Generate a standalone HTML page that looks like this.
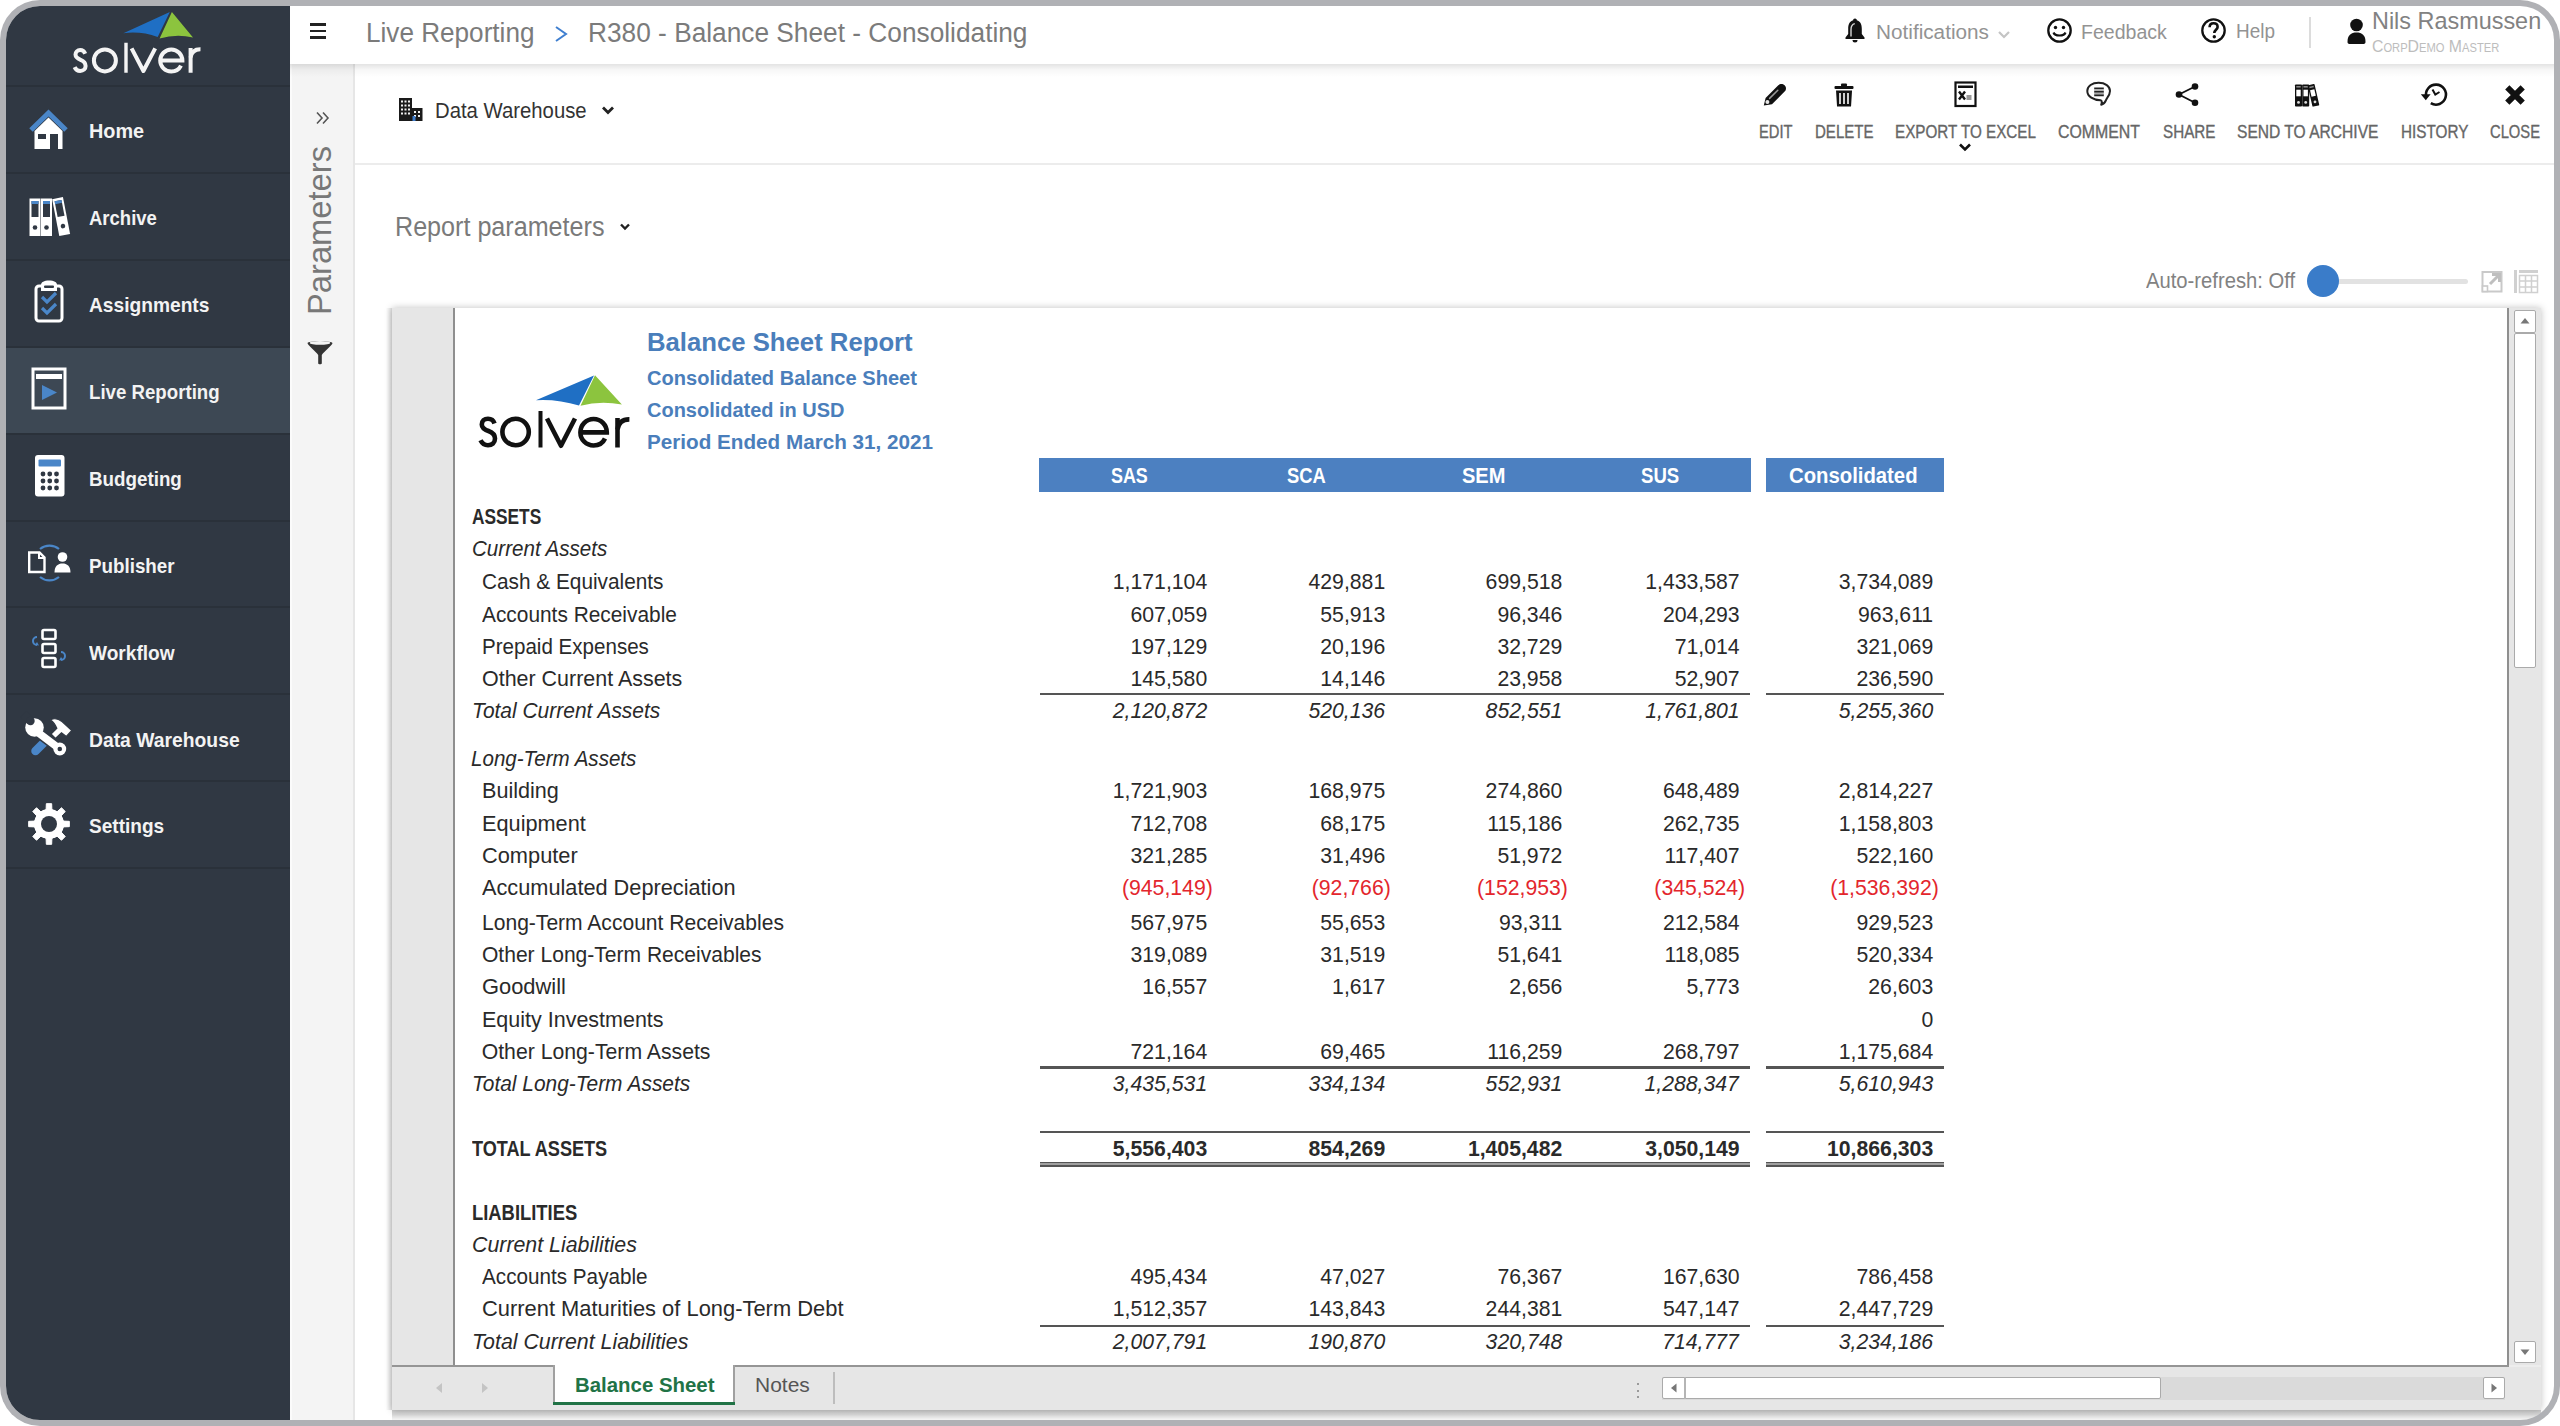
<!DOCTYPE html>
<html><head><meta charset="utf-8"><title>Solver - Balance Sheet</title>
<style>
html,body{margin:0;padding:0;width:2560px;height:1426px;overflow:hidden;background:#fff;}
body{font-family:"Liberation Sans",sans-serif;}
.frame{position:absolute;left:0;top:0;width:2560px;height:1426px;border-radius:40px;background:#b0b1b5;}
.inner{position:absolute;left:6px;top:6px;width:2548px;height:1414px;border-radius:34px;overflow:hidden;background:#fff;}
.w{position:absolute;left:-6px;top:-6px;width:2560px;height:1426px;}
.t{position:absolute;white-space:pre;}
.r{position:absolute;}
.s{position:absolute;overflow:visible;}
</style></head><body>
<div class="frame"><div class="inner"><div class="w">
<div class="r" style="left:290.00px;top:64.00px;width:64.00px;height:1362.00px;background:#f4f4f4;"></div>
<div class="r" style="left:354.00px;top:163.00px;width:2206.00px;height:2.00px;background:#ececec;"></div>
<div class="r" style="left:353.00px;top:64.00px;width:1.50px;height:1362.00px;background:#e6e6e6;"></div>
<div class="r" style="left:290.00px;top:64.00px;width:1.50px;height:1362.00px;background:#fbfbfb;"></div>
<div class="r" style="left:290.00px;top:64.00px;width:2270.00px;height:13.00px;background:linear-gradient(rgba(0,0,0,0.11),rgba(0,0,0,0.03) 45%,rgba(0,0,0,0));"></div>
<div class="r" style="left:0.00px;top:0.00px;width:290.00px;height:1426.00px;background:#303843;"></div>
<div class="r" style="left:0.00px;top:85.00px;width:290.00px;height:2.00px;background:#2a313a;"></div>
<div class="r" style="left:0.00px;top:171.90px;width:290.00px;height:2.00px;background:#2a313a;"></div>
<div class="r" style="left:0.00px;top:258.80px;width:290.00px;height:2.00px;background:#2a313a;"></div>
<div class="r" style="left:0.00px;top:345.70px;width:290.00px;height:2.00px;background:#2a313a;"></div>
<div class="r" style="left:0.00px;top:432.60px;width:290.00px;height:2.00px;background:#2a313a;"></div>
<div class="r" style="left:0.00px;top:519.50px;width:290.00px;height:2.00px;background:#2a313a;"></div>
<div class="r" style="left:0.00px;top:606.40px;width:290.00px;height:2.00px;background:#2a313a;"></div>
<div class="r" style="left:0.00px;top:693.30px;width:290.00px;height:2.00px;background:#2a313a;"></div>
<div class="r" style="left:0.00px;top:780.20px;width:290.00px;height:2.00px;background:#2a313a;"></div>
<div class="r" style="left:0.00px;top:867.10px;width:290.00px;height:2.00px;background:#2a313a;"></div>
<div class="r" style="left:0.00px;top:347.50px;width:290.00px;height:85.30px;background:#3d4854;"></div>
<div class="r" style="left:392.00px;top:308.00px;width:2149.00px;height:1102.00px;background:#ffffff;box-shadow:0 0 7px rgba(0,0,0,0.25);"></div>
<div class="r" style="left:392.00px;top:1410.00px;width:2149.00px;height:10.00px;background:linear-gradient(rgba(0,0,0,0.20),rgba(0,0,0,0.16) 45%,rgba(0,0,0,0.04));"></div>
<div class="r" style="left:386.00px;top:308.00px;width:6.00px;height:1102.00px;background:linear-gradient(90deg,rgba(0,0,0,0),rgba(0,0,0,0.13));"></div>
<div class="r" style="left:392.00px;top:308.00px;width:60.50px;height:1057.00px;background:#e6e6e6;"></div>
<div class="r" style="left:452.50px;top:308.00px;width:2.00px;height:1057.00px;background:#8f8f8f;"></div>
<div class="r" style="left:2507.00px;top:308.00px;width:2.00px;height:1057.00px;background:#8f8f8f;"></div>
<div class="r" style="left:2509.00px;top:308.00px;width:32.00px;height:1057.00px;background:#e6e6e6;"></div>
<div class="r" style="left:392.00px;top:1365.00px;width:162.50px;height:2.00px;background:#959595;"></div>
<div class="r" style="left:733.50px;top:1365.00px;width:1775.50px;height:2.00px;background:#959595;"></div>
<div class="r" style="left:2509.00px;top:1365.00px;width:32.00px;height:2.00px;background:#ededed;"></div>
<div class="r" style="left:392.00px;top:1367.00px;width:2149.00px;height:43.00px;background:#e6e6e6;"></div>
<svg class="s" style="left:60.00px;top:0.00px;" width="150" height="85" viewBox="0 0 150 85">
<path d="M123.4 33.2 L169.8 12.1 L157.7 36.9 Q141 31 123.4 33.2 Z" fill="#1f6fc4" transform="translate(-60,0)"/>
<path d="M171.9 12.1 L193 37.4 Q176 33.5 159.6 38.5 Z" fill="#8cc43e" transform="translate(-60,0)"/>
<g transform="translate(-60,0)" fill="none" stroke="#f4f4f4" stroke-width="4">
<path d="M85.2 53.8 C84.2 51.3 82.3 50.1 80.2 50.1 C77.4 50.1 75.5 51.9 75.5 54.6 C75.5 57.6 78.1 58.8 80.6 59.8 C83.6 61 85.6 62.6 85.6 65.9 C85.6 69.1 83.3 70.9 80.2 70.9 C77.6 70.9 75.6 69.4 74.6 67.1"/>
<circle cx="104.9" cy="60.4" r="11"/>
<path d="M126 42.7 V72.8" stroke-width="3.4"/>
<path d="M131.6 48.3 L143.4 71 L155.2 48.3" stroke-linejoin="round"/>
<path d="M160.4 60.6 H182.4 C182.4 54.4 177.4 49.5 171.3 49.5 C165.2 49.5 160.2 54.4 160.2 60.6 C160.2 66.7 165.2 71.5 171.3 71.5 C175.6 71.5 179.2 69.2 181 65.6"/>
<path d="M190.6 48 V72.8"/>
<path d="M190.6 57.5 C191.5 52 195.2 49.2 200.5 49.3" />
</g></svg>
<div class="t" style="left:88.60px;top:120.25px;font-size:21.08px;line-height:21.08px;color:#f3f3f3;font-weight:700;transform:scaleX(0.9411);transform-origin:left top;">Home</div>
<div class="t" style="left:88.60px;top:207.15px;font-size:21.08px;line-height:21.08px;color:#f3f3f3;font-weight:700;transform:scaleX(0.8783);transform-origin:left top;">Archive</div>
<div class="t" style="left:88.60px;top:294.05px;font-size:21.08px;line-height:21.08px;color:#f3f3f3;font-weight:700;transform:scaleX(0.9098);transform-origin:left top;">Assignments</div>
<div class="t" style="left:88.60px;top:380.95px;font-size:21.08px;line-height:21.08px;color:#f3f3f3;font-weight:700;transform:scaleX(0.8851);transform-origin:left top;">Live Reporting</div>
<div class="t" style="left:88.60px;top:467.85px;font-size:21.08px;line-height:21.08px;color:#f3f3f3;font-weight:700;transform:scaleX(0.8908);transform-origin:left top;">Budgeting</div>
<div class="t" style="left:88.60px;top:554.75px;font-size:21.08px;line-height:21.08px;color:#f3f3f3;font-weight:700;transform:scaleX(0.8913);transform-origin:left top;">Publisher</div>
<div class="t" style="left:88.60px;top:641.65px;font-size:21.08px;line-height:21.08px;color:#f3f3f3;font-weight:700;transform:scaleX(0.9058);transform-origin:left top;">Workflow</div>
<div class="t" style="left:88.60px;top:728.55px;font-size:21.08px;line-height:21.08px;color:#f3f3f3;font-weight:700;transform:scaleX(0.9164);transform-origin:left top;">Data Warehouse</div>
<div class="t" style="left:88.60px;top:815.45px;font-size:21.08px;line-height:21.08px;color:#f3f3f3;font-weight:700;transform:scaleX(0.9033);transform-origin:left top;">Settings</div>
<svg class="s" style="left:28.00px;top:108.00px;" width="42" height="42" viewBox="0 0 42 42">
<path d="M3 22 L20.5 5 L38 22" fill="none" stroke="#4a86c8" stroke-width="5" stroke-linejoin="miter"/>
<path d="M6.5 23 L20.5 9.5 L34.5 23 V41 H6.5 Z" fill="#ffffff"/>
<rect x="10" y="26" width="8" height="5" fill="#303843"/>
<rect x="22" y="26" width="8" height="15" fill="#303843"/>
</svg>
<svg class="s" style="left:28.00px;top:196.00px;" width="46" height="42" viewBox="0 0 46 42">
<g>
<rect x="1.5" y="2.5" width="11" height="37.5" fill="#ffffff"/>
<rect x="13" y="2.5" width="11" height="37.5" fill="#ffffff"/>
<g transform="rotate(-11 31.3 40)"><rect x="31.3" y="2.5" width="11" height="37.5" fill="#ffffff"/>
<rect x="33.3" y="5" width="7" height="16" fill="#303843"/><rect x="33.3" y="5" width="7" height="3" fill="#4a86c8"/><circle cx="36.8" cy="31" r="2.3" fill="#303843"/></g>
<rect x="3.5" y="5" width="7" height="16" fill="#303843"/><rect x="3.5" y="5" width="7" height="3" fill="#4a86c8"/><circle cx="7" cy="31.5" r="2.3" fill="#303843"/>
<rect x="15" y="5" width="7" height="16" fill="#303843"/><rect x="15" y="5" width="7" height="3" fill="#4a86c8"/><circle cx="18.5" cy="31.5" r="2.3" fill="#303843"/>
</g></svg>
<svg class="s" style="left:32.00px;top:277.00px;" width="36" height="48" viewBox="0 0 36 48">
<rect x="4" y="9" width="26" height="35" rx="3" fill="none" stroke="#ffffff" stroke-width="3"/>
<path d="M9 14 V8 C9 5 12 3.5 17 3.5 C22 3.5 25 5 25 8 V14 Z" fill="#ffffff"/>
<rect x="12" y="8.5" width="10" height="2.5" rx="1" fill="#303843"/>
<path d="M10 20 L15 25 L24 16 M10 31 L15 36 L24 27" fill="none" stroke="#4a86c8" stroke-width="3.2"/>
</svg>
<svg class="s" style="left:30.00px;top:366.00px;" width="40" height="46" viewBox="0 0 40 46">
<rect x="3" y="3" width="32" height="39" fill="none" stroke="#ffffff" stroke-width="3"/>
<rect x="6" y="8" width="26" height="5" fill="#ffffff"/>
<path d="M12 19 L27 26.5 L12 34 Z" fill="#4a86c8"/>
</svg>
<svg class="s" style="left:33.00px;top:453.00px;" width="34" height="46" viewBox="0 0 34 46">
<rect x="2" y="2" width="29.5" height="41.5" rx="3" fill="#ffffff"/>
<rect x="5.5" y="6.5" width="22.5" height="7" rx="1" fill="#4a86c8"/>
<g fill="#303843">
<circle cx="10" cy="21" r="2.4"/><circle cx="16.75" cy="21" r="2.4"/><circle cx="23.5" cy="21" r="2.4"/>
<circle cx="10" cy="28" r="2.4"/><circle cx="16.75" cy="28" r="2.4"/><circle cx="23.5" cy="28" r="2.4"/>
<circle cx="10" cy="35" r="2.4"/><circle cx="16.75" cy="35" r="2.4"/><circle cx="23.5" cy="35" r="2.4"/>
</g></svg>
<svg class="s" style="left:26.00px;top:544.00px;" width="48" height="38" viewBox="0 0 48 38">
<path d="M14 5 A15 15 0 0 1 33 5" fill="none" stroke="#4a86c8" stroke-width="2.2"/>
<path d="M14 33 A15 15 0 0 0 33 33" fill="none" stroke="#4a86c8" stroke-width="2.2"/>
<path d="M3.2 8.5 H13.5 L18.5 13.5 V28 H3.2 Z" fill="none" stroke="#ffffff" stroke-width="2.4"/>
<path d="M13 8.5 V14 H18.5" fill="none" stroke="#ffffff" stroke-width="2"/>
<circle cx="36.5" cy="13" r="4.8" fill="#ffffff"/>
<path d="M28.5 28.5 C28.5 22 32 19.5 36.5 19.5 C41 19.5 44.5 22 44.5 28.5 Z" fill="#ffffff"/>
</svg>
<svg class="s" style="left:28.00px;top:626.00px;" width="44" height="48" viewBox="0 0 44 48">
<g fill="none" stroke="#ffffff" stroke-width="2.6">
<rect x="14.5" y="4" width="13" height="9" rx="1.5"/>
<rect x="14.5" y="18" width="13" height="9" rx="1.5"/>
<rect x="14.5" y="32" width="13" height="9" rx="1.5"/>
</g>
<path d="M9 11 A4 4 0 0 0 9 19" fill="none" stroke="#4a86c8" stroke-width="2"/>
<path d="M7 19 L11 19.5 L9 16 Z" fill="#4a86c8"/>
<path d="M33 26 A4 4 0 0 1 33 34" fill="none" stroke="#4a86c8" stroke-width="2"/>
<path d="M35 34 L31 34.5 L33 31 Z" fill="#4a86c8"/>
</svg>
<svg class="s" style="left:20.00px;top:700.00px;" width="60" height="70" viewBox="20 700 60 70">
<path d="M35.5 751 L44 742.5" stroke="#4a86c8" stroke-width="8.5" stroke-linecap="round"/>
<path d="M50.5 720 C54 718 58 718.5 62 721.5 L71.8 730.5 L66.3 736.5 L61.5 732.8 L55.5 738.5 L51 734 L56.8 728.3 C55.5 725 53.5 722 50.5 720 Z" fill="#ffffff" stroke="#303843" stroke-width="1.2"/>
<g stroke="#303843" stroke-width="2.2" paint-order="stroke">
<path d="M36 731 L59.8 749" stroke="#303843" stroke-width="10.5" stroke-linecap="round"/>
</g>
<path d="M36 731 L59.8 749" stroke="#ffffff" stroke-width="7.5" stroke-linecap="round"/>
<circle cx="59.8" cy="749" r="6.4" fill="#ffffff"/>
<circle cx="59.8" cy="749" r="2.3" fill="#303843"/>
<circle cx="34.5" cy="727.5" r="9.3" fill="#ffffff"/>
<path d="M33.47 718.03 L26.4 710.96 L20.46 716.9 L27.53 723.97 Z" fill="#303843"/>
<circle cx="30.5" cy="721" r="4.2" fill="#303843"/>
</svg>
<svg class="s" style="left:28.00px;top:803.00px;" width="42" height="42" viewBox="0 0 42 42">
<path d="M35.21 18.12 L41.33 18.34 L41.33 23.66 L35.21 23.88 L33.09 29.01 L37.25 33.49 L33.49 37.25 L29.01 33.09 L23.88 35.21 L23.66 41.33 L18.34 41.33 L18.12 35.21 L12.99 33.09 L8.51 37.25 L4.75 33.49 L8.91 29.01 L6.79 23.88 L0.67 23.66 L0.67 18.34 L6.79 18.12 L8.91 12.99 L4.75 8.51 L8.51 4.75 L12.99 8.91 L18.12 6.79 L18.34 0.67 L23.66 0.67 L23.88 6.79 L29.01 8.91 L33.49 4.75 L37.25 8.51 L33.09 12.99 Z" fill="#ffffff" stroke="#ffffff" stroke-width="1" stroke-linejoin="round"/>
<circle cx="21" cy="21" r="15" fill="#ffffff"/>
<circle cx="21" cy="21" r="8" fill="#303843"/>
</svg>
<div class="r" style="left:310.00px;top:23.20px;width:16.00px;height:2.60px;background:#222;"></div>
<div class="r" style="left:310.00px;top:29.70px;width:16.00px;height:2.60px;background:#222;"></div>
<div class="r" style="left:310.00px;top:36.20px;width:16.00px;height:2.60px;background:#222;"></div>
<div class="t" style="left:366.00px;top:18.81px;font-size:27.62px;line-height:27.62px;color:#7b7b7b;transform:scaleX(0.9463);transform-origin:left top;">Live Reporting</div>
<svg class="s" style="left:553.00px;top:24.00px;" width="16" height="20" viewBox="0 0 16 20"><path d="M3 3 L13 10 L3 17" fill="none" stroke="#3f7fd0" stroke-width="2"/></svg>
<div class="t" style="left:588.40px;top:18.81px;font-size:27.62px;line-height:27.62px;color:#7b7b7b;transform:scaleX(0.9513);transform-origin:left top;">R380 - Balance Sheet - Consolidating</div>
<svg class="s" style="left:1844.00px;top:15.80px;" width="22" height="27" viewBox="0 0 22 27">
<path d="M11 2.5 C12.3 2.5 12.8 3.3 12.8 4.3 C16.5 5.3 17.8 8.5 17.8 13 V18 L20.5 21.5 V23 H1.5 V21.5 L4.2 18 V13 C4.2 8.5 5.5 5.3 9.2 4.3 C9.2 3.3 9.7 2.5 11 2.5 Z" fill="#111"/>
<path d="M8.5 24 A2.5 2.5 0 0 0 13.5 24 Z" fill="#111"/>
<path d="M10.8 7.6 C8.2 8.2 7 10.2 7 13.5 V20.5" stroke="#d8d8d8" stroke-width="1.4" fill="none"/>
</svg>
<div class="t" style="left:1876.00px;top:21.76px;font-size:20.35px;line-height:20.35px;color:#939393;transform:scaleX(1.0195);transform-origin:left top;">Notifications</div>
<svg class="s" style="left:1996.00px;top:29.00px;" width="16" height="12" viewBox="0 0 16 12"><path d="M3 3 L8 8 L13 3" fill="none" stroke="#c4c4c4" stroke-width="2.2"/></svg>
<svg class="s" style="left:2046.00px;top:17.00px;" width="27" height="27" viewBox="0 0 27 27">
<circle cx="13.5" cy="13.5" r="11.2" fill="none" stroke="#111" stroke-width="2.3"/>
<circle cx="9.5" cy="10.5" r="1.7" fill="#111"/><circle cx="17.5" cy="10.5" r="1.7" fill="#111"/>
<path d="M7.5 15.5 C9 19.5 18 19.5 19.5 15.5" fill="none" stroke="#111" stroke-width="2.2"/>
</svg>
<div class="t" style="left:2080.80px;top:21.76px;font-size:20.35px;line-height:20.35px;color:#939393;transform:scaleX(0.9607);transform-origin:left top;">Feedback</div>
<svg class="s" style="left:2200.00px;top:17.00px;" width="27" height="27" viewBox="0 0 27 27">
<circle cx="13.5" cy="13.5" r="11.2" fill="none" stroke="#111" stroke-width="2.3"/>
<path d="M9.6 10.3 C9.6 7.6 11.4 6.3 13.6 6.3 C16 6.3 17.6 7.8 17.6 9.9 C17.6 12.6 14.3 13 14.3 16" fill="none" stroke="#111" stroke-width="2.6"/>
<circle cx="14.3" cy="19.8" r="1.7" fill="#111"/>
</svg>
<div class="t" style="left:2236.00px;top:22.38px;font-size:19.62px;line-height:19.62px;color:#939393;transform:scaleX(0.9662);transform-origin:left top;">Help</div>
<div class="r" style="left:2308.50px;top:16.60px;width:2.00px;height:31.10px;background:#dcdcdc;"></div>
<svg class="s" style="left:2346.00px;top:18.00px;" width="22" height="27" viewBox="0 0 22 27">
<circle cx="10.5" cy="7" r="6.3" fill="#111"/>
<path d="M1.5 24 C1.5 17 5 14.5 10.5 14.5 C16 14.5 19.5 17 19.5 24 C19.5 25.5 18.5 26 17 26 H4 C2.5 26 1.5 25.5 1.5 24 Z" fill="#111"/>
</svg>
<div class="t" style="left:2371.80px;top:9.90px;font-size:23.26px;line-height:23.26px;color:#828282;transform:scaleX(1.0071);transform-origin:left top;">Nils Rasmussen</div>
<div class="t" style="left:2371.50px;top:38.30px;font-size:17.01px;line-height:17.01px;color:#bdbdbd;transform:scaleX(0.9300);transform-origin:left top;font-variant:small-caps;">CorpDemo Master</div>
<svg class="s" style="left:314.00px;top:110.00px;" width="18" height="16" viewBox="0 0 18 16"><path d="M3 2.5 L8 8 L3 13.5 M9 2.5 L14 8 L9 13.5" fill="none" stroke="#555" stroke-width="1.6"/></svg>
<div class="t" style="left:302.00px;top:314.70px;font-size:34px;line-height:34px;color:#787878;transform-origin:0 0;transform:rotate(-90deg) scaleX(0.9620);">Parameters</div>
<svg class="s" style="left:305.00px;top:338.00px;" width="30" height="28" viewBox="0 0 30 28">
<path d="M2.5 5 C2.5 2.5 27.5 2.5 27.5 5 C27.5 7 19 13.5 16.8 17 V25.5 C16.8 26.5 13.2 26.5 13.2 25.5 V17 C11 13.5 2.5 7 2.5 5 Z" fill="#333"/>
<ellipse cx="15" cy="4.9" rx="10.3" ry="1.9" fill="#f4f4f4"/>
</svg>
<svg class="s" style="left:398.00px;top:97.00px;" width="26" height="26" viewBox="0 0 26 26">
<g fill="#1a1a1a">
<rect x="1" y="1" width="13" height="23"/>
<rect x="14" y="11" width="10.5" height="13"/>
</g>
<g fill="#f2f2f2">
<rect x="3" y="3.5" width="2" height="2"/><rect x="6.5" y="3.5" width="2" height="2"/><rect x="10" y="3.5" width="2" height="2"/>
<rect x="3" y="7.5" width="2" height="2"/><rect x="6.5" y="7.5" width="2" height="2"/><rect x="10" y="7.5" width="2" height="2"/>
<rect x="3" y="11.5" width="2" height="2"/><rect x="6.5" y="11.5" width="2" height="2"/><rect x="10" y="11.5" width="2" height="2"/>
<rect x="3" y="15.5" width="2" height="2"/><rect x="6.5" y="15.5" width="2" height="2"/><rect x="10" y="15.5" width="2" height="2"/>
<rect x="16" y="14" width="2" height="2"/><rect x="20" y="14" width="2" height="2"/>
<rect x="16" y="18" width="2" height="2"/><rect x="20" y="18" width="2" height="2"/>
</g>
<rect x="14.5" y="19" width="3" height="5" fill="#3d7ac8"/>
</svg>
<div class="t" style="left:435.30px;top:99.53px;font-size:21.80px;line-height:21.80px;color:#333333;transform:scaleX(0.9318);transform-origin:left top;">Data Warehouse</div>
<svg class="s" style="left:600.00px;top:104.00px;" width="16" height="14" viewBox="0 0 16 14"><path d="M3 3.5 L8 8.5 L13 3.5" fill="none" stroke="#222" stroke-width="2.8"/></svg>
<div class="t" style="left:394.50px;top:212.61px;font-size:27.62px;line-height:27.62px;color:#7a7a7a;transform:scaleX(0.9099);transform-origin:left top;">Report parameters</div>
<svg class="s" style="left:617.00px;top:220.00px;" width="16" height="14" viewBox="0 0 16 14"><path d="M4 4.5 L8 8.5 L12 4.5" fill="none" stroke="#222" stroke-width="2.4"/></svg>
<div class="t" style="left:1759.00px;top:124.13px;font-size:17.44px;line-height:17.44px;color:#666666;transform:scaleX(0.8431);transform-origin:left top;-webkit-text-stroke:0.35px #666666;">EDIT</div>
<div class="t" style="left:1814.50px;top:124.13px;font-size:17.44px;line-height:17.44px;color:#666666;transform:scaleX(0.8622);transform-origin:left top;-webkit-text-stroke:0.35px #666666;">DELETE</div>
<div class="t" style="left:1894.50px;top:124.13px;font-size:17.44px;line-height:17.44px;color:#666666;transform:scaleX(0.8727);transform-origin:left top;-webkit-text-stroke:0.35px #666666;">EXPORT TO EXCEL</div>
<div class="t" style="left:2058.00px;top:124.13px;font-size:17.44px;line-height:17.44px;color:#666666;transform:scaleX(0.9101);transform-origin:left top;-webkit-text-stroke:0.35px #666666;">COMMENT</div>
<div class="t" style="left:2162.80px;top:124.13px;font-size:17.44px;line-height:17.44px;color:#666666;transform:scaleX(0.8737);transform-origin:left top;-webkit-text-stroke:0.35px #666666;">SHARE</div>
<div class="t" style="left:2236.50px;top:124.13px;font-size:17.44px;line-height:17.44px;color:#666666;transform:scaleX(0.8938);transform-origin:left top;-webkit-text-stroke:0.35px #666666;">SEND TO ARCHIVE</div>
<div class="t" style="left:2400.60px;top:124.13px;font-size:17.44px;line-height:17.44px;color:#666666;transform:scaleX(0.8764);transform-origin:left top;-webkit-text-stroke:0.35px #666666;">HISTORY</div>
<div class="t" style="left:2489.50px;top:124.13px;font-size:17.44px;line-height:17.44px;color:#666666;transform:scaleX(0.8456);transform-origin:left top;-webkit-text-stroke:0.35px #666666;">CLOSE</div>
<svg class="s" style="left:1762.00px;top:82.00px;" width="26" height="26" viewBox="0 0 26 26">
<path d="M1.8 23.6 L3.6 16 L16.3 3.3 C18 1.6 20.6 1.3 22.6 3.3 C24.6 5.3 24.3 7.9 22.6 9.6 L10 22.2 Z" fill="#111"/>
<circle cx="5.4" cy="20" r="2" fill="#e6e6e6"/>
<path d="M7.6 16.4 L15.8 8.2" stroke="#9a9a9a" stroke-width="1.5" stroke-linecap="round"/>
</svg>
<svg class="s" style="left:1832.00px;top:82.00px;" width="24" height="26" viewBox="0 0 24 26">
<rect x="2.5" y="4" width="19" height="3" rx="1" fill="#111"/>
<rect x="9" y="1.5" width="6" height="3" rx="1" fill="#111"/>
<path d="M4 8.5 H20 L19 24.5 H5 Z" fill="#111"/>
<path d="M8 11 V22 M12 11 V22 M16 11 V22" stroke="#fff" stroke-width="1.6"/>
</svg>
<svg class="s" style="left:1953.00px;top:80.00px;" width="26" height="28" viewBox="0 0 26 28">
<rect x="2.5" y="2.5" width="20" height="23.5" fill="none" stroke="#111" stroke-width="2.2"/>
<rect x="5" y="5.5" width="15" height="2.5" fill="#111"/>
<path d="M6 11.5 L12 19.5 M12 11.5 L6 19.5" stroke="#111" stroke-width="2.4"/>
<rect x="13.5" y="15" width="5" height="5" fill="#999"/>
</svg>
<svg class="s" style="left:1957.00px;top:142.00px;" width="16" height="12" viewBox="0 0 16 12"><path d="M3 2.5 L8 7.5 L13 2.5" fill="none" stroke="#111" stroke-width="2.6"/></svg>
<svg class="s" style="left:2085.00px;top:81.00px;" width="28" height="28" viewBox="0 0 28 28">
<path d="M15.5 19.2 C8.5 19.2 2.3 15.5 2.3 10 C2.3 5 7.2 1.8 13.6 1.8 C20.2 1.8 25 5.2 25 10 C25 13.3 23.7 15.3 21.8 17.6 C20.6 19.2 20.8 22.6 16.2 23.8 C17 21.5 17.2 19.4 15.5 19.2 Z" fill="none" stroke="#222" stroke-width="2" stroke-linejoin="round"/>
<path d="M9.2 7.4 H18.8 M9.2 10.7 H18.8 M9.2 14.2 H18.8" stroke="#222" stroke-width="1.9"/>
<path d="M9.2 9.05 H18.8 M9.2 12.45 H18.8" stroke="#aaa" stroke-width="1.4"/>
</svg>
<svg class="s" style="left:2174.00px;top:82.00px;" width="28" height="26" viewBox="0 0 28 26">
<circle cx="21" cy="4.5" r="3.3" fill="#111"/><circle cx="5" cy="12.5" r="3.3" fill="#111"/><circle cx="21" cy="20.8" r="3.3" fill="#111"/>
<path d="M21 4.5 L5 12.5 L21 20.8" fill="none" stroke="#111" stroke-width="1.8"/>
</svg>
<svg class="s" style="left:2290.00px;top:78.00px;" width="36" height="34" viewBox="0 0 36 34"><rect x="5.00" y="6.40" width="7.00" height="22.20" rx="0.8" fill="#111"/><rect x="6.30" y="11.70" width="4.40" height="6.60" fill="#fff"/><rect x="6.30" y="8.00" width="4.40" height="1.60" fill="#888"/><circle cx="8.50" cy="24.40" r="1.4" fill="#ddd"/><rect x="12.20" y="6.40" width="7.00" height="22.20" rx="0.8" fill="#111"/><rect x="13.50" y="11.70" width="4.40" height="6.60" fill="#fff"/><rect x="13.50" y="8.00" width="4.40" height="1.60" fill="#888"/><circle cx="15.70" cy="24.40" r="1.4" fill="#ddd"/><g transform="rotate(-13 22.5 28.6)"><rect x="22.50" y="6.80" width="7.00" height="22.00" rx="0.8" fill="#111"/><rect x="23.80" y="12.10" width="4.40" height="6.60" fill="#fff"/><rect x="23.80" y="8.40" width="4.40" height="1.60" fill="#888"/><circle cx="26.00" cy="24.60" r="1.4" fill="#ddd"/></g></svg>
<svg class="s" style="left:2419.00px;top:81.00px;" width="30" height="27" viewBox="0 0 30 27">
<path d="M7.2 15.8 A10 10 0 1 1 11.8 22.2" fill="none" stroke="#111" stroke-width="2.6"/>
<path d="M1.8 13.2 L6.8 19.2 L11.6 13.2 Z" fill="#111"/>
<path d="M13.5 8.5 L16.3 13.5 L20.5 11" fill="none" stroke="#111" stroke-width="2"/>
</svg>
<svg class="s" style="left:2502.00px;top:82.00px;" width="26" height="26" viewBox="0 0 26 26"><path d="M5.3 5.3 L20.7 20.7 M20.7 5.3 L5.3 20.7" stroke="#111" stroke-width="6"/></svg>
<div class="t" style="left:2145.80px;top:269.73px;font-size:21.80px;line-height:21.80px;color:#828282;transform:scaleX(0.9278);transform-origin:left top;">Auto-refresh: Off</div>
<div class="r" style="left:2322.00px;top:278.50px;width:145.50px;height:5.00px;background:#e2e2e2;border-radius:3px;"></div>
<div class="r" style="left:2306.5px;top:265.3px;width:32px;height:32px;border-radius:50%;background:#3a7cc9;"></div>
<svg class="s" style="left:2479.00px;top:267.00px;" width="26" height="28" viewBox="0 0 26 28">
<rect x="3.5" y="5" width="19" height="19.5" fill="none" stroke="#c9c9c9" stroke-width="2"/>
<rect x="3.5" y="19" width="5" height="5.5" fill="#fff" stroke="#c9c9c9" stroke-width="1.6"/>
<path d="M11 17 L19.5 8.5 M13 7.5 H20.5 V15" fill="none" stroke="#bfbfbf" stroke-width="3"/>
</svg>
<svg class="s" style="left:2512.00px;top:267.00px;" width="28" height="28" viewBox="0 0 28 28">
<g fill="#d0d0d0">
<rect x="2" y="3" width="3" height="23"/>
<rect x="7" y="3" width="19" height="3"/>
</g>
<g fill="none" stroke="#d0d0d0" stroke-width="1.5">
<rect x="7.5" y="8.5" width="18" height="17"/>
<path d="M13.5 8.5 V25.5 M19.5 8.5 V25.5 M7.5 14 H25.5 M7.5 20 H25.5"/>
</g></svg>
<svg class="s" style="left:470.00px;top:370.00px;" width="165" height="85" viewBox="0 0 165 85">
<g transform="translate(-470,-370)">
<path d="M535.9 400.2 L594 375.5 L579 405.6 Q558 399 535.9 400.2 Z" fill="#1f6fc4"/>
<path d="M595 375.2 L621.9 404.5 Q600 400.5 580.5 405.8 Z" fill="#8cc43e"/>
<g fill="none" stroke="#111" stroke-width="4.6">
<path d="M494.5 423.5 C493.5 420.3 491 418.7 488 418.7 C484.3 418.7 481.8 421 481.8 424.4 C481.8 428.3 485 429.7 488.5 431 C492.3 432.4 495 434.4 495 438.6 C495 442.7 492 445.2 488 445.2 C484.5 445.2 482 443.3 480.5 440.3"/>
<circle cx="515.6" cy="432" r="13.2"/>
<path d="M540.5 411 V447.5" stroke-width="4"/>
<path d="M547 418.5 L561 445.8 L575 418.5" stroke-linejoin="round"/>
<path d="M580.7 432.4 H606.8 C606.8 425 601 419 593.6 419 C586.3 419 580.4 425 580.4 432.4 C580.4 439.7 586.3 445.5 593.6 445.5 C598.7 445.5 603 442.8 605 438.5"/>
<path d="M617.5 418 V447.5"/>
<path d="M617.5 429.5 C618.5 422.5 623 419.3 629.4 419.4"/>
</g></g></svg>
<div class="t" style="left:647.20px;top:329.53px;font-size:25.58px;line-height:25.58px;color:#4a7ebb;font-weight:700;transform:scaleX(1.0049);transform-origin:left top;">Balance Sheet Report</div>
<div class="t" style="left:647.20px;top:367.87px;font-size:20.93px;line-height:20.93px;color:#4a7ebb;font-weight:700;transform:scaleX(0.9593);transform-origin:left top;">Consolidated Balance Sheet</div>
<div class="t" style="left:647.20px;top:399.67px;font-size:20.93px;line-height:20.93px;color:#4a7ebb;font-weight:700;transform:scaleX(0.9547);transform-origin:left top;">Consolidated in USD</div>
<div class="t" style="left:647.20px;top:431.87px;font-size:20.93px;line-height:20.93px;color:#4a7ebb;font-weight:700;transform:scaleX(0.9881);transform-origin:left top;">Period Ended March 31, 2021</div>
<div class="r" style="left:1039.00px;top:458.00px;width:711.50px;height:34.00px;background:#4c80c1;"></div>
<div class="r" style="left:1765.50px;top:458.00px;width:178.50px;height:34.00px;background:#4c80c1;"></div>
<div class="t" style="left:1110.60px;top:464.63px;font-size:21.80px;line-height:21.80px;color:#ffffff;font-weight:700;transform:scaleX(0.8210);transform-origin:left top;">SAS</div>
<div class="t" style="left:1286.80px;top:464.63px;font-size:21.80px;line-height:21.80px;color:#ffffff;font-weight:700;transform:scaleX(0.8409);transform-origin:left top;">SCA</div>
<div class="t" style="left:1462.00px;top:464.63px;font-size:21.80px;line-height:21.80px;color:#ffffff;font-weight:700;transform:scaleX(0.9186);transform-origin:left top;">SEM</div>
<div class="t" style="left:1641.20px;top:464.63px;font-size:21.80px;line-height:21.80px;color:#ffffff;font-weight:700;transform:scaleX(0.8522);transform-origin:left top;">SUS</div>
<div class="t" style="left:1789.30px;top:464.63px;font-size:21.80px;line-height:21.80px;color:#ffffff;font-weight:700;transform:scaleX(0.9312);transform-origin:left top;">Consolidated</div>
<div class="t" style="left:471.50px;top:506.43px;font-size:21.22px;line-height:21.22px;color:#2a2a2a;font-weight:700;transform:scaleX(0.8150);transform-origin:left top;">ASSETS</div>
<div class="t" style="left:471.50px;top:538.03px;font-size:21.22px;line-height:21.22px;color:#2a2a2a;font-style:italic;transform:scaleX(0.9696);transform-origin:left top;">Current Assets</div>
<div class="t" style="left:481.50px;top:571.23px;font-size:21.22px;line-height:21.22px;color:#2a2a2a;transform:scaleX(0.9800);transform-origin:left top;">Cash &amp; Equivalents</div>
<div class="t" style="left:1112.79px;top:571.23px;font-size:21.22px;line-height:21.22px;color:#2a2a2a;">1,171,104</div>
<div class="t" style="left:1308.49px;top:571.23px;font-size:21.22px;line-height:21.22px;color:#2a2a2a;">429,881</div>
<div class="t" style="left:1485.59px;top:571.23px;font-size:21.22px;line-height:21.22px;color:#2a2a2a;">699,518</div>
<div class="t" style="left:1645.19px;top:571.23px;font-size:21.22px;line-height:21.22px;color:#2a2a2a;">1,433,587</div>
<div class="t" style="left:1838.79px;top:571.23px;font-size:21.22px;line-height:21.22px;color:#2a2a2a;">3,734,089</div>
<div class="t" style="left:481.50px;top:603.63px;font-size:21.22px;line-height:21.22px;color:#2a2a2a;transform:scaleX(0.9835);transform-origin:left top;">Accounts Receivable</div>
<div class="t" style="left:1130.49px;top:603.63px;font-size:21.22px;line-height:21.22px;color:#2a2a2a;">607,059</div>
<div class="t" style="left:1320.29px;top:603.63px;font-size:21.22px;line-height:21.22px;color:#2a2a2a;">55,913</div>
<div class="t" style="left:1497.39px;top:603.63px;font-size:21.22px;line-height:21.22px;color:#2a2a2a;">96,346</div>
<div class="t" style="left:1662.89px;top:603.63px;font-size:21.22px;line-height:21.22px;color:#2a2a2a;">204,293</div>
<div class="t" style="left:1858.06px;top:603.63px;font-size:21.22px;line-height:21.22px;color:#2a2a2a;">963,611</div>
<div class="t" style="left:481.50px;top:635.93px;font-size:21.22px;line-height:21.22px;color:#2a2a2a;transform:scaleX(0.9691);transform-origin:left top;">Prepaid Expenses</div>
<div class="t" style="left:1130.49px;top:635.93px;font-size:21.22px;line-height:21.22px;color:#2a2a2a;">197,129</div>
<div class="t" style="left:1320.29px;top:635.93px;font-size:21.22px;line-height:21.22px;color:#2a2a2a;">20,196</div>
<div class="t" style="left:1497.39px;top:635.93px;font-size:21.22px;line-height:21.22px;color:#2a2a2a;">32,729</div>
<div class="t" style="left:1674.69px;top:635.93px;font-size:21.22px;line-height:21.22px;color:#2a2a2a;">71,014</div>
<div class="t" style="left:1856.49px;top:635.93px;font-size:21.22px;line-height:21.22px;color:#2a2a2a;">321,069</div>
<div class="t" style="left:481.50px;top:668.03px;font-size:21.22px;line-height:21.22px;color:#2a2a2a;transform:scaleX(1.0109);transform-origin:left top;">Other Current Assets</div>
<div class="t" style="left:1130.49px;top:668.03px;font-size:21.22px;line-height:21.22px;color:#2a2a2a;">145,580</div>
<div class="t" style="left:1320.29px;top:668.03px;font-size:21.22px;line-height:21.22px;color:#2a2a2a;">14,146</div>
<div class="t" style="left:1497.39px;top:668.03px;font-size:21.22px;line-height:21.22px;color:#2a2a2a;">23,958</div>
<div class="t" style="left:1674.69px;top:668.03px;font-size:21.22px;line-height:21.22px;color:#2a2a2a;">52,907</div>
<div class="t" style="left:1856.49px;top:668.03px;font-size:21.22px;line-height:21.22px;color:#2a2a2a;">236,590</div>
<div class="t" style="left:472.00px;top:700.23px;font-size:21.22px;line-height:21.22px;color:#2a2a2a;font-style:italic;transform:scaleX(0.9876);transform-origin:left top;">Total Current Assets</div>
<div class="t" style="left:1112.79px;top:700.23px;font-size:21.22px;line-height:21.22px;color:#2a2a2a;font-style:italic;">2,120,872</div>
<div class="t" style="left:1308.47px;top:700.23px;font-size:21.22px;line-height:21.22px;color:#2a2a2a;font-style:italic;">520,136</div>
<div class="t" style="left:1485.59px;top:700.23px;font-size:21.22px;line-height:21.22px;color:#2a2a2a;font-style:italic;">852,551</div>
<div class="t" style="left:1645.19px;top:700.23px;font-size:21.22px;line-height:21.22px;color:#2a2a2a;font-style:italic;">1,761,801</div>
<div class="t" style="left:1838.79px;top:700.23px;font-size:21.22px;line-height:21.22px;color:#2a2a2a;font-style:italic;">5,255,360</div>
<div class="t" style="left:471.40px;top:748.03px;font-size:21.22px;line-height:21.22px;color:#2a2a2a;font-style:italic;transform:scaleX(0.9693);transform-origin:left top;">Long-Term Assets</div>
<div class="t" style="left:481.70px;top:780.43px;font-size:21.22px;line-height:21.22px;color:#2a2a2a;transform:scaleX(1.0172);transform-origin:left top;">Building</div>
<div class="t" style="left:1112.79px;top:780.43px;font-size:21.22px;line-height:21.22px;color:#2a2a2a;">1,721,903</div>
<div class="t" style="left:1308.49px;top:780.43px;font-size:21.22px;line-height:21.22px;color:#2a2a2a;">168,975</div>
<div class="t" style="left:1485.59px;top:780.43px;font-size:21.22px;line-height:21.22px;color:#2a2a2a;">274,860</div>
<div class="t" style="left:1662.89px;top:780.43px;font-size:21.22px;line-height:21.22px;color:#2a2a2a;">648,489</div>
<div class="t" style="left:1838.79px;top:780.43px;font-size:21.22px;line-height:21.22px;color:#2a2a2a;">2,814,227</div>
<div class="t" style="left:481.70px;top:812.63px;font-size:21.22px;line-height:21.22px;color:#2a2a2a;transform:scaleX(1.0231);transform-origin:left top;">Equipment</div>
<div class="t" style="left:1130.49px;top:812.63px;font-size:21.22px;line-height:21.22px;color:#2a2a2a;">712,708</div>
<div class="t" style="left:1320.29px;top:812.63px;font-size:21.22px;line-height:21.22px;color:#2a2a2a;">68,175</div>
<div class="t" style="left:1487.16px;top:812.63px;font-size:21.22px;line-height:21.22px;color:#2a2a2a;">115,186</div>
<div class="t" style="left:1662.89px;top:812.63px;font-size:21.22px;line-height:21.22px;color:#2a2a2a;">262,735</div>
<div class="t" style="left:1838.79px;top:812.63px;font-size:21.22px;line-height:21.22px;color:#2a2a2a;">1,158,803</div>
<div class="t" style="left:481.70px;top:844.63px;font-size:21.22px;line-height:21.22px;color:#2a2a2a;transform:scaleX(1.0270);transform-origin:left top;">Computer</div>
<div class="t" style="left:1130.49px;top:844.63px;font-size:21.22px;line-height:21.22px;color:#2a2a2a;">321,285</div>
<div class="t" style="left:1320.29px;top:844.63px;font-size:21.22px;line-height:21.22px;color:#2a2a2a;">31,496</div>
<div class="t" style="left:1497.39px;top:844.63px;font-size:21.22px;line-height:21.22px;color:#2a2a2a;">51,972</div>
<div class="t" style="left:1664.46px;top:844.63px;font-size:21.22px;line-height:21.22px;color:#2a2a2a;">117,407</div>
<div class="t" style="left:1856.49px;top:844.63px;font-size:21.22px;line-height:21.22px;color:#2a2a2a;">522,160</div>
<div class="t" style="left:481.70px;top:876.83px;font-size:21.22px;line-height:21.22px;color:#2a2a2a;transform:scaleX(1.0238);transform-origin:left top;">Accumulated Depreciation</div>
<div class="t" style="left:1121.95px;top:876.83px;font-size:21.22px;line-height:21.22px;color:#e3262d;">(945,149)</div>
<div class="t" style="left:1311.75px;top:876.83px;font-size:21.22px;line-height:21.22px;color:#e3262d;">(92,766)</div>
<div class="t" style="left:1477.05px;top:876.83px;font-size:21.22px;line-height:21.22px;color:#e3262d;">(152,953)</div>
<div class="t" style="left:1654.35px;top:876.83px;font-size:21.22px;line-height:21.22px;color:#e3262d;">(345,524)</div>
<div class="t" style="left:1830.25px;top:876.83px;font-size:21.22px;line-height:21.22px;color:#e3262d;">(1,536,392)</div>
<div class="t" style="left:481.70px;top:912.03px;font-size:21.22px;line-height:21.22px;color:#2a2a2a;transform:scaleX(0.9923);transform-origin:left top;">Long-Term Account Receivables</div>
<div class="t" style="left:1130.49px;top:912.03px;font-size:21.22px;line-height:21.22px;color:#2a2a2a;">567,975</div>
<div class="t" style="left:1320.29px;top:912.03px;font-size:21.22px;line-height:21.22px;color:#2a2a2a;">55,653</div>
<div class="t" style="left:1498.98px;top:912.03px;font-size:21.22px;line-height:21.22px;color:#2a2a2a;">93,311</div>
<div class="t" style="left:1662.89px;top:912.03px;font-size:21.22px;line-height:21.22px;color:#2a2a2a;">212,584</div>
<div class="t" style="left:1856.49px;top:912.03px;font-size:21.22px;line-height:21.22px;color:#2a2a2a;">929,523</div>
<div class="t" style="left:481.70px;top:944.23px;font-size:21.22px;line-height:21.22px;color:#2a2a2a;transform:scaleX(0.9918);transform-origin:left top;">Other Long-Term Receivables</div>
<div class="t" style="left:1130.49px;top:944.23px;font-size:21.22px;line-height:21.22px;color:#2a2a2a;">319,089</div>
<div class="t" style="left:1320.29px;top:944.23px;font-size:21.22px;line-height:21.22px;color:#2a2a2a;">31,519</div>
<div class="t" style="left:1497.39px;top:944.23px;font-size:21.22px;line-height:21.22px;color:#2a2a2a;">51,641</div>
<div class="t" style="left:1664.46px;top:944.23px;font-size:21.22px;line-height:21.22px;color:#2a2a2a;">118,085</div>
<div class="t" style="left:1856.49px;top:944.23px;font-size:21.22px;line-height:21.22px;color:#2a2a2a;">520,334</div>
<div class="t" style="left:481.70px;top:976.43px;font-size:21.22px;line-height:21.22px;color:#2a2a2a;transform:scaleX(1.0309);transform-origin:left top;">Goodwill</div>
<div class="t" style="left:1142.29px;top:976.43px;font-size:21.22px;line-height:21.22px;color:#2a2a2a;">16,557</div>
<div class="t" style="left:1332.11px;top:976.43px;font-size:21.22px;line-height:21.22px;color:#2a2a2a;">1,617</div>
<div class="t" style="left:1509.21px;top:976.43px;font-size:21.22px;line-height:21.22px;color:#2a2a2a;">2,656</div>
<div class="t" style="left:1686.51px;top:976.43px;font-size:21.22px;line-height:21.22px;color:#2a2a2a;">5,773</div>
<div class="t" style="left:1868.29px;top:976.43px;font-size:21.22px;line-height:21.22px;color:#2a2a2a;">26,603</div>
<div class="t" style="left:481.70px;top:1008.63px;font-size:21.22px;line-height:21.22px;color:#2a2a2a;transform:scaleX(1.0130);transform-origin:left top;">Equity Investments</div>
<div class="t" style="left:1921.40px;top:1008.63px;font-size:21.22px;line-height:21.22px;color:#2a2a2a;">0</div>
<div class="t" style="left:481.70px;top:1040.73px;font-size:21.22px;line-height:21.22px;color:#2a2a2a;">Other Long-Term Assets</div>
<div class="t" style="left:1130.49px;top:1040.73px;font-size:21.22px;line-height:21.22px;color:#2a2a2a;">721,164</div>
<div class="t" style="left:1320.29px;top:1040.73px;font-size:21.22px;line-height:21.22px;color:#2a2a2a;">69,465</div>
<div class="t" style="left:1487.16px;top:1040.73px;font-size:21.22px;line-height:21.22px;color:#2a2a2a;">116,259</div>
<div class="t" style="left:1662.89px;top:1040.73px;font-size:21.22px;line-height:21.22px;color:#2a2a2a;">268,797</div>
<div class="t" style="left:1838.79px;top:1040.73px;font-size:21.22px;line-height:21.22px;color:#2a2a2a;">1,175,684</div>
<div class="t" style="left:471.60px;top:1073.03px;font-size:21.22px;line-height:21.22px;color:#2a2a2a;font-style:italic;transform:scaleX(0.9840);transform-origin:left top;">Total Long-Term Assets</div>
<div class="t" style="left:1112.79px;top:1073.03px;font-size:21.22px;line-height:21.22px;color:#2a2a2a;font-style:italic;">3,435,531</div>
<div class="t" style="left:1308.49px;top:1073.03px;font-size:21.22px;line-height:21.22px;color:#2a2a2a;font-style:italic;">334,134</div>
<div class="t" style="left:1485.59px;top:1073.03px;font-size:21.22px;line-height:21.22px;color:#2a2a2a;font-style:italic;">552,931</div>
<div class="t" style="left:1644.53px;top:1073.03px;font-size:21.22px;line-height:21.22px;color:#2a2a2a;font-style:italic;">1,288,347</div>
<div class="t" style="left:1838.79px;top:1073.03px;font-size:21.22px;line-height:21.22px;color:#2a2a2a;font-style:italic;">5,610,943</div>
<div class="t" style="left:471.70px;top:1137.53px;font-size:21.22px;line-height:21.22px;color:#2a2a2a;font-weight:700;transform:scaleX(0.8536);transform-origin:left top;">TOTAL ASSETS</div>
<div class="t" style="left:1112.79px;top:1137.53px;font-size:21.22px;line-height:21.22px;color:#2a2a2a;font-weight:700;">5,556,403</div>
<div class="t" style="left:1308.49px;top:1137.53px;font-size:21.22px;line-height:21.22px;color:#2a2a2a;font-weight:700;">854,269</div>
<div class="t" style="left:1467.89px;top:1137.53px;font-size:21.22px;line-height:21.22px;color:#2a2a2a;font-weight:700;">1,405,482</div>
<div class="t" style="left:1645.19px;top:1137.53px;font-size:21.22px;line-height:21.22px;color:#2a2a2a;font-weight:700;">3,050,149</div>
<div class="t" style="left:1826.99px;top:1137.53px;font-size:21.22px;line-height:21.22px;color:#2a2a2a;font-weight:700;">10,866,303</div>
<div class="t" style="left:471.70px;top:1201.73px;font-size:21.22px;line-height:21.22px;color:#2a2a2a;font-weight:700;transform:scaleX(0.8664);transform-origin:left top;">LIABILITIES</div>
<div class="t" style="left:471.70px;top:1233.73px;font-size:21.22px;line-height:21.22px;color:#2a2a2a;font-style:italic;transform:scaleX(1.0058);transform-origin:left top;">Current Liabilities</div>
<div class="t" style="left:481.90px;top:1266.03px;font-size:21.22px;line-height:21.22px;color:#2a2a2a;transform:scaleX(0.9748);transform-origin:left top;">Accounts Payable</div>
<div class="t" style="left:1130.49px;top:1266.03px;font-size:21.22px;line-height:21.22px;color:#2a2a2a;">495,434</div>
<div class="t" style="left:1320.29px;top:1266.03px;font-size:21.22px;line-height:21.22px;color:#2a2a2a;">47,027</div>
<div class="t" style="left:1497.39px;top:1266.03px;font-size:21.22px;line-height:21.22px;color:#2a2a2a;">76,367</div>
<div class="t" style="left:1662.89px;top:1266.03px;font-size:21.22px;line-height:21.22px;color:#2a2a2a;">167,630</div>
<div class="t" style="left:1856.49px;top:1266.03px;font-size:21.22px;line-height:21.22px;color:#2a2a2a;">786,458</div>
<div class="t" style="left:481.60px;top:1298.33px;font-size:21.22px;line-height:21.22px;color:#2a2a2a;transform:scaleX(1.0321);transform-origin:left top;">Current Maturities of Long-Term Debt</div>
<div class="t" style="left:1112.79px;top:1298.33px;font-size:21.22px;line-height:21.22px;color:#2a2a2a;">1,512,357</div>
<div class="t" style="left:1308.49px;top:1298.33px;font-size:21.22px;line-height:21.22px;color:#2a2a2a;">143,843</div>
<div class="t" style="left:1485.59px;top:1298.33px;font-size:21.22px;line-height:21.22px;color:#2a2a2a;">244,381</div>
<div class="t" style="left:1662.89px;top:1298.33px;font-size:21.22px;line-height:21.22px;color:#2a2a2a;">547,147</div>
<div class="t" style="left:1838.79px;top:1298.33px;font-size:21.22px;line-height:21.22px;color:#2a2a2a;">2,447,729</div>
<div class="t" style="left:472.40px;top:1330.73px;font-size:21.22px;line-height:21.22px;color:#2a2a2a;font-style:italic;transform:scaleX(1.0062);transform-origin:left top;">Total Current Liabilities</div>
<div class="t" style="left:1112.79px;top:1330.73px;font-size:21.22px;line-height:21.22px;color:#2a2a2a;font-style:italic;">2,007,791</div>
<div class="t" style="left:1308.49px;top:1330.73px;font-size:21.22px;line-height:21.22px;color:#2a2a2a;font-style:italic;">190,870</div>
<div class="t" style="left:1485.59px;top:1330.73px;font-size:21.22px;line-height:21.22px;color:#2a2a2a;font-style:italic;">320,748</div>
<div class="t" style="left:1662.23px;top:1330.73px;font-size:21.22px;line-height:21.22px;color:#2a2a2a;font-style:italic;">714,777</div>
<div class="t" style="left:1838.77px;top:1330.73px;font-size:21.22px;line-height:21.22px;color:#2a2a2a;font-style:italic;">3,234,186</div>
<div class="r" style="left:1040.00px;top:692.80px;width:710.30px;height:2.50px;background:#555555;"></div>
<div class="r" style="left:1766.30px;top:692.80px;width:177.70px;height:2.50px;background:#555555;"></div>
<div class="r" style="left:1040.00px;top:1066.00px;width:710.30px;height:2.50px;background:#555555;"></div>
<div class="r" style="left:1766.30px;top:1066.00px;width:177.70px;height:2.50px;background:#555555;"></div>
<div class="r" style="left:1040.00px;top:1130.80px;width:710.30px;height:2.70px;background:#555555;"></div>
<div class="r" style="left:1766.30px;top:1130.80px;width:177.70px;height:2.70px;background:#555555;"></div>
<div class="r" style="left:1040.00px;top:1161.70px;width:710.30px;height:5.40px;background:#555555;"></div>
<div class="r" style="left:1766.30px;top:1161.70px;width:177.70px;height:5.40px;background:#555555;"></div>
<div class="r" style="left:1040.00px;top:1163.10px;width:710.30px;height:1.70px;background:#a0a0a0;"></div>
<div class="r" style="left:1766.30px;top:1163.10px;width:177.70px;height:1.70px;background:#a0a0a0;"></div>
<div class="r" style="left:1040.00px;top:1324.50px;width:710.30px;height:2.50px;background:#555555;"></div>
<div class="r" style="left:1766.30px;top:1324.50px;width:177.70px;height:2.50px;background:#555555;"></div>
<div class="r" style="left:554.50px;top:1365.00px;width:179.00px;height:38.00px;background:#ffffff;"></div>
<div class="r" style="left:553.00px;top:1365.00px;width:1.80px;height:38.00px;background:#a0a0a0;"></div>
<div class="r" style="left:733.30px;top:1365.00px;width:1.70px;height:38.00px;background:#a0a0a0;"></div>
<div class="r" style="left:553.00px;top:1402.30px;width:182.00px;height:3.20px;background:#217346;"></div>
<div class="t" style="left:574.60px;top:1374.81px;font-size:20.06px;line-height:20.06px;color:#217346;font-weight:700;transform:scaleX(1.0174);transform-origin:left top;">Balance Sheet</div>
<div class="t" style="left:754.80px;top:1374.81px;font-size:20.06px;line-height:20.06px;color:#555555;transform:scaleX(1.0460);transform-origin:left top;">Notes</div>
<div class="r" style="left:833.00px;top:1372.00px;width:2.00px;height:31.60px;background:#bdbdbd;"></div>
<svg class="s" style="left:433.00px;top:1380.00px;" width="12" height="16" viewBox="0 0 12 16"><path d="M9 3 L3 8 L9 13 Z" fill="#c4c4c4"/></svg>
<svg class="s" style="left:479.00px;top:1380.00px;" width="12" height="16" viewBox="0 0 12 16"><path d="M3 3 L9 8 L3 13 Z" fill="#c4c4c4"/></svg>
<div class="r" style="left:1636.50px;top:1383.00px;width:2.00px;height:2.00px;background:#9a9a9a;"></div>
<div class="r" style="left:1636.50px;top:1389.50px;width:2.00px;height:2.00px;background:#9a9a9a;"></div>
<div class="r" style="left:1636.50px;top:1396.00px;width:2.00px;height:2.00px;background:#9a9a9a;"></div>
<div class="r" style="left:1662.00px;top:1376.50px;width:843.30px;height:23.50px;background:#dadada;"></div>
<div class="r" style="left:1662.00px;top:1377.00px;width:499.30px;height:22.40px;background:#ffffff;border:1px solid #aaaaaa;box-sizing:border-box;border-radius:2px;"></div>
<div class="r" style="left:1684.00px;top:1377.00px;width:2.00px;height:22.40px;background:#b5b5b5;"></div>
<svg class="s" style="left:1666.00px;top:1380.00px;" width="16" height="16" viewBox="0 0 16 16"><path d="M10.5 3.5 L5 8 L10.5 12.5 Z" fill="#777"/></svg>
<div class="r" style="left:2483.00px;top:1377.00px;width:22.30px;height:22.40px;background:#ffffff;border:1px solid #aaaaaa;box-sizing:border-box;border-radius:2px;"></div>
<svg class="s" style="left:2486.00px;top:1380.00px;" width="16" height="16" viewBox="0 0 16 16"><path d="M5.5 3.5 L11 8 L5.5 12.5 Z" fill="#777"/></svg>
<div class="r" style="left:2513.80px;top:309.50px;width:22.60px;height:23.50px;background:#ffffff;border:1px solid #aaaaaa;box-sizing:border-box;border-radius:2px;"></div>
<svg class="s" style="left:2517.00px;top:313.00px;" width="16" height="16" viewBox="0 0 16 16"><path d="M3.5 10.5 L8 5 L12.5 10.5 Z" fill="#777"/></svg>
<div class="r" style="left:2513.80px;top:333.00px;width:22.60px;height:335.00px;background:#ffffff;border:1px solid #aaaaaa;box-sizing:border-box;border-radius:2px;"></div>
<div class="r" style="left:2513.80px;top:1340.50px;width:22.60px;height:22.70px;background:#ffffff;border:1px solid #aaaaaa;box-sizing:border-box;border-radius:2px;"></div>
<svg class="s" style="left:2517.00px;top:1344.00px;" width="16" height="16" viewBox="0 0 16 16"><path d="M3.5 5.5 L8 11 L12.5 5.5 Z" fill="#777"/></svg>
</div></div></div>
</body></html>
